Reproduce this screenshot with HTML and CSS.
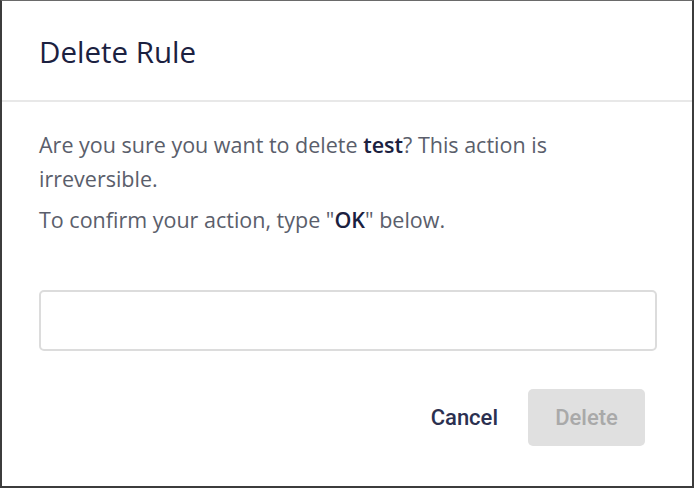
FILE: index.html
```html
<!DOCTYPE html>
<html lang="en">
<head>
    <meta charset="UTF-8">
    <meta name="viewport" content="width=device-width, initial-scale=1.0">
    <title>Delete Rule</title>
    <link rel="stylesheet" href="styles.css">
</head>
<body>
    <div class="dialog">
        <div class="dialog-header">
            <h2 class="dialog-title">Delete Rule</h2>
        </div>
        <div class="dialog-body">
            <p class="dialog-text">Are you sure you want to delete <strong>test</strong>? This action is irreversible.</p>
            <p class="dialog-text">To confirm your action, type "<strong>OK</strong>" below.</p>
            <input type="text" class="confirm-input">
        </div>
        <div class="dialog-footer">
            <button class="cancel-button">Cancel</button>
            <button class="delete-button" disabled>Delete</button>
        </div>
    </div>
</body>
</html>
```

FILE: styles.css
```css
/* Basic reset */
* {
    margin: 0;
    padding: 0;
    box-sizing: border-box;
}
body {
    font-family: 'Open Sans', sans-serif;
    background-color: #ffffff;
}
/* Dialog frame */
.dialog {
    width: 694px;
    height: 488px;
    background-color: #ffffff;
    border: 2px solid #3c3c3c;
    border-top: 1px solid #6a6a6a;
    display: flex;
    flex-direction: column;
}
/* Header */
.dialog-header {
    height: 101px;
    border-bottom: 2px solid #e8e8e8;
    padding: 0 37px;
    display: flex;
    align-items: center;
}
.dialog-title {
    font-size: 29.5px;
    font-weight: 500;
    color: #1b2140;
    margin-top: 1px;
}
/* Body */
.dialog-body {
    padding: 26px 35px 0 37px;
}
.dialog-text {
    font-size: 21.5px;
    line-height: 34px;
    color: #5a5e6b;
}
.dialog-text + .dialog-text {
    margin-top: 7px;
}
.dialog-text strong {
    font-weight: 600;
    color: #1b2140;
}
.confirm-input {
    display: block;
    width: 100%;
    height: 61px;
    margin-top: 53px;
    border: 2px solid #dcdcdc;
    border-radius: 5px;
    font-size: 18px;
    padding: 0 14px;
    outline: none;
}
/* Footer */
.dialog-footer {
    display: flex;
    justify-content: flex-end;
    align-items: center;
    gap: 14px;
    padding: 38px 47px 0 0;
}
.cancel-button {
    font-family: 'Roboto', sans-serif;
    font-size: 22px;
    font-weight: 500;
    color: #2b3050;
    background: none;
    border: none;
    padding: 0 16px;
    height: 57px;
    cursor: pointer;
}
.delete-button {
    font-family: 'Roboto', sans-serif;
    font-size: 22px;
    font-weight: 500;
    color: #a9a9a9;
    background-color: #e0e0e0;
    border: none;
    border-radius: 5px;
    width: 117px;
    height: 57px;
}
```
